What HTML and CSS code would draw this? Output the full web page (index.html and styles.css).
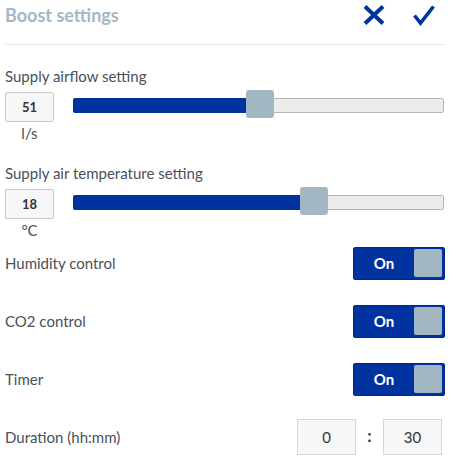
FILE: index.html
```html
<!DOCTYPE html>
<html>
<head>
<meta charset="utf-8">
<link rel="stylesheet" href="styles.css">
</head>
<body>
<div class="panel">
  <div class="header">
    <div class="title">Boost settings</div>
    <div class="actions">
      <svg class="icon" width="22" height="20" viewBox="0 0 22 20"><path d="M2 1.5 L20 18.5 M20 1.5 L2 18.5" stroke="#0033a0" stroke-width="4" fill="none"/></svg>
      <svg class="icon" width="22" height="21" viewBox="0 0 22 21"><path d="M1.5 10.5 L7.5 18 L20.5 1.5" stroke="#0033a0" stroke-width="3.6" fill="none" stroke-linejoin="miter"/></svg>
    </div>
  </div>

  <div class="group first">
    <div class="label">Supply airflow setting</div>
    <div class="slider-row">
      <div class="value-col">
        <div class="value">51</div>
        <div class="unit">l/s</div>
      </div>
      <div class="slider">
        <div class="track">
          <div class="fill" style="width:47%"></div>
          <div class="thumb" style="left:47%"></div>
        </div>
      </div>
    </div>
  </div>

  <div class="group">
    <div class="label">Supply air temperature setting</div>
    <div class="slider-row">
      <div class="value-col">
        <div class="value">18</div>
        <div class="unit">°C</div>
      </div>
      <div class="slider">
        <div class="track">
          <div class="fill" style="width:61.5%"></div>
          <div class="thumb" style="left:61.5%"></div>
        </div>
      </div>
    </div>
  </div>

  <div class="rows">
    <div class="row">
      <div class="row-label">Humidity control</div>
      <div class="toggle"><span class="toggle-text">On</span><span class="knob"></span></div>
    </div>
    <div class="row">
      <div class="row-label">CO2 control</div>
      <div class="toggle"><span class="toggle-text">On</span><span class="knob"></span></div>
    </div>
    <div class="row">
      <div class="row-label">Timer</div>
      <div class="toggle"><span class="toggle-text">On</span><span class="knob"></span></div>
    </div>
    <div class="row">
      <div class="row-label">Duration (hh:mm)</div>
      <div class="duration">
        <div class="time-box">0</div>
        <div class="colon">:</div>
        <div class="time-box">30</div>
      </div>
    </div>
  </div>
</div>
</body>
</html>
```

FILE: styles.css
```css
html, body {
  margin: 0;
  padding: 0;
  background: #ffffff;
}
body {
  font-family: "Lato", "Open Sans", sans-serif;
  color: #4a4f5b;
}
.panel {
  padding: 0 5px;
  width: 440px;
}
.header {
  height: 44px;
  border-bottom: 1px solid #e6e6e6;
  display: flex;
  justify-content: space-between;
  align-items: flex-start;
}
.title {
  font-size: 18px;
  font-weight: 700;
  color: #a6b7c3;
  line-height: 20px;
  padding-top: 5px;
}
.actions {
  display: flex;
  gap: 28px;
  padding-top: 5px;
  padding-right: 10px;
}
.icon { display: block; }

.group {
  margin-top: 21px;
}
.group.first {
  margin-top: 21px;
}
.label {
  font-size: 15px;
  line-height: 20px;
}
.slider-row {
  display: flex;
  align-items: flex-start;
  margin-top: 6px;
  gap: 19px;
}
.value-col {
  width: 49px;
  display: flex;
  flex-direction: column;
  align-items: center;
}
.value {
  box-sizing: border-box;
  width: 49px;
  height: 30px;
  border: 1px solid #c8c8c8;
  border-radius: 2px;
  background: #f7f7f7;
  font-size: 13px;
  font-weight: 700;
  color: #333;
  display: flex;
  align-items: center;
  justify-content: center;
}
.unit {
  font-size: 15px;
  line-height: 18px;
  margin-top: 2px;
}
.slider {
  flex: 1;
  padding-top: 6px;
  padding-right: 1px;
}
.track {
  position: relative;
  box-sizing: border-box;
  height: 15px;
  background: #ececec;
  border: 1px solid #b7b7b7;
  border-radius: 2px;
}
.fill {
  position: absolute;
  left: -1px;
  top: -1px;
  bottom: -1px;
  background: #0033a0;
  border-radius: 2px 0 0 2px;
}
.thumb {
  position: absolute;
  top: -9px;
  width: 28px;
  height: 28px;
  margin-left: -1px;
  background: #a3b7c3;
  border-radius: 3px;
}

.rows {
  margin-top: -5px;
}
.row {
  height: 58px;
  display: flex;
  align-items: center;
  justify-content: space-between;
}
.row-label {
  font-size: 15px;
}
.toggle {
  box-sizing: border-box;
  width: 92px;
  height: 33px;
  background: #0033a0;
  border: 1px solid #00288a;
  border-radius: 2px;
  display: flex;
  align-items: center;
  padding: 2px 2px 2px 0;
}
.toggle-text {
  flex: 1;
  text-align: center;
  color: #fff;
  font-weight: 700;
  font-size: 15px;
}
.knob {
  width: 28px;
  height: 28px;
  background: #a3b7c3;
  border-radius: 2px;
}
.duration {
  display: flex;
  align-items: center;
  margin-right: 3px;
}
.time-box {
  box-sizing: border-box;
  width: 59px;
  height: 36px;
  border: 1px solid #d6d6d6;
  background: #f7f7f7;
  display: flex;
  align-items: center;
  justify-content: center;
  font-size: 15px;
  color: #333;
}
.colon {
  width: 27px;
  text-align: center;
  font-size: 17px;
  font-weight: 700;
  color: #333;
  margin-top: -3px;
}
```
